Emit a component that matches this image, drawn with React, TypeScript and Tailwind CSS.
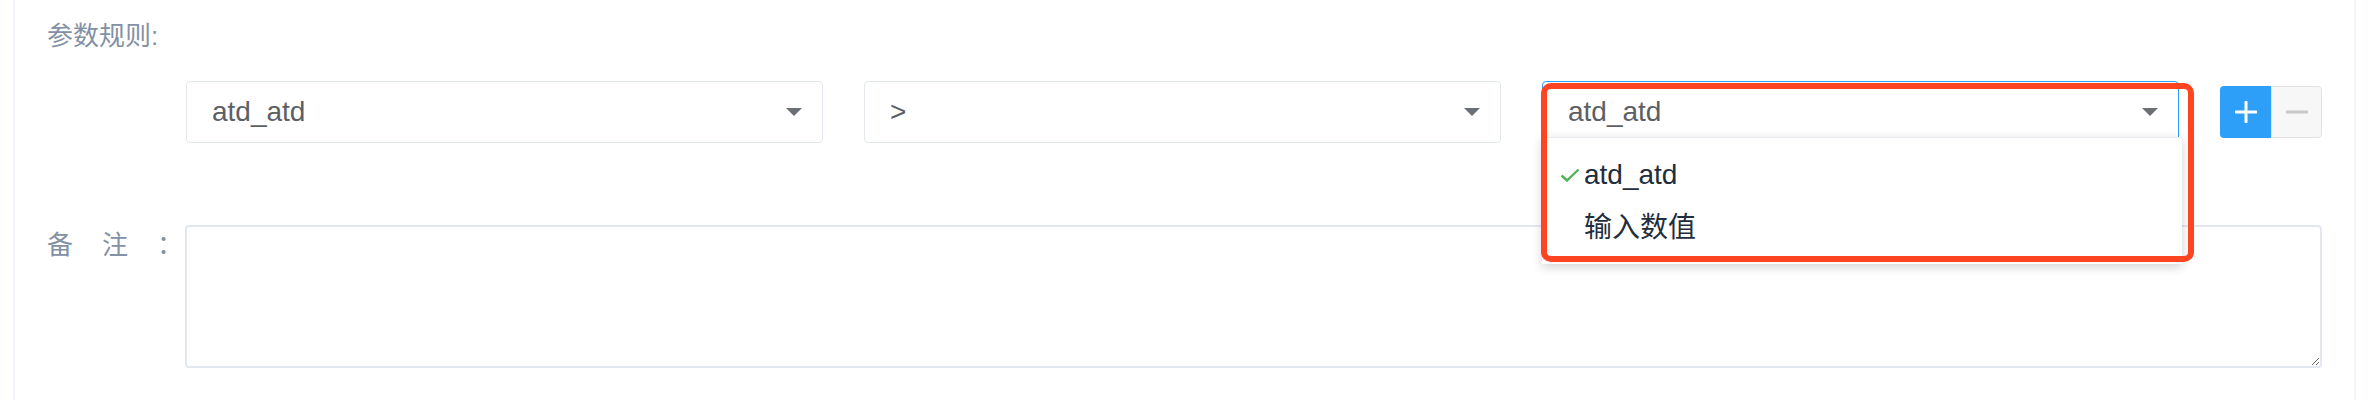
import { useState } from 'react';

const font = { fontFamily: '"Liberation Sans", "Noto Sans CJK SC", sans-serif' };

function Arrow({ color = '#6b6f76' }: { color?: string }) {
  return (
    <svg width="16" height="8" viewBox="0 0 16 8" className="shrink-0">
      <path d="M0 0 L16 0 L8 8 Z" fill={color} />
    </svg>
  );
}

function Select({ value, active = false }: { value: string; active?: boolean }) {
  return (
    <div
      className={`flex h-[62px] w-[637px] items-center justify-between rounded-[4px] border bg-white pl-[25px] pr-[20px] ${
        active ? 'border-[#2d9ff8]' : 'border-[#e3e7f0]'
      }`}
    >
      <span className="text-[28px] leading-none text-[#5c6066]">{value}</span>
      <Arrow />
    </div>
  );
}

export default function App() {
  const [picked] = useState('atd_atd');
  const options = ['atd_atd', '输入数值'];

  return (
    <div className="h-[400px] w-[2372px] bg-white pl-[13px]" style={font}>
      <div className="h-[400px] w-[2343px] border-x-2 border-[#f0f4fc] pl-[32px]">
        <div className="pt-[23px] text-[26px] leading-[26px] text-[#8391a5]">参数规则:</div>

        <div className="mt-[32px] flex items-start">
          <div className="w-[139px] shrink-0" />
          <Select value="atd_atd" />
          <div className="w-[41px]" />
          <Select value=">" />
          <div className="w-[41px]" />
          <div className="relative">
            <Select value={picked} active />
            <div className="absolute left-0 top-[56px] z-10 w-[640px] border-t border-[#e8ebf0] bg-white py-[10px] shadow-[0_3px_10px_rgba(0,0,0,0.18)]">
              {options.map((o) => (
                <div key={o} className="flex h-[53px] items-center">
                  <div className="flex w-[42px] justify-end pr-[4px]">
                    {o === picked && (
                      <svg width="20" height="14" viewBox="0 0 20 14">
                        <path d="M1.5 7.5 L7 12.5 L18.5 1.5" fill="none" stroke="#4eb356" strokeWidth="2.4" />
                      </svg>
                    )}
                  </div>
                  <span className="text-[28px] leading-none text-[#1f2d3d]">{o}</span>
                </div>
              ))}
            </div>
            <div className="absolute -left-[1px] top-[2px] z-20 h-[179px] w-[653px] rounded-[10px] border-[6px] border-[#ff4422]" />
          </div>
          <div className="ml-[41px] mt-[5px] flex h-[52px]">
            <button className="flex w-[51px] items-center justify-center rounded-l-[4px] bg-[#2d9ff8]">
              <svg width="22" height="22" viewBox="0 0 22 22">
                <path d="M11 1 V21 M1 11 H21" stroke="white" strokeWidth="3" strokeLinecap="round" />
              </svg>
            </button>
            <button className="flex w-[51px] items-center justify-center rounded-r-[4px] border border-[#e2e2e2] bg-[#f7f7f7]">
              <svg width="22" height="4" viewBox="0 0 22 4">
                <path d="M1 2 H21" stroke="#c8c8c8" strokeWidth="3" strokeLinecap="round" />
              </svg>
            </button>
          </div>
        </div>

        <div className="mt-[82px] flex items-start">
          <div className="relative h-[40px] w-[138px] shrink-0 text-[26px] leading-[40px] text-[#8391a5]">
            <span className="absolute left-0 top-0">备</span>
            <span className="absolute left-[55px] top-0">注</span>
            <span className="absolute left-[110px] top-0">：</span>
          </div>
          <textarea className="h-[143px] w-[2137px] rounded-[4px] border-2 border-[#e3e7f0] bg-white outline-none" />
        </div>
      </div>
    </div>
  );
}
